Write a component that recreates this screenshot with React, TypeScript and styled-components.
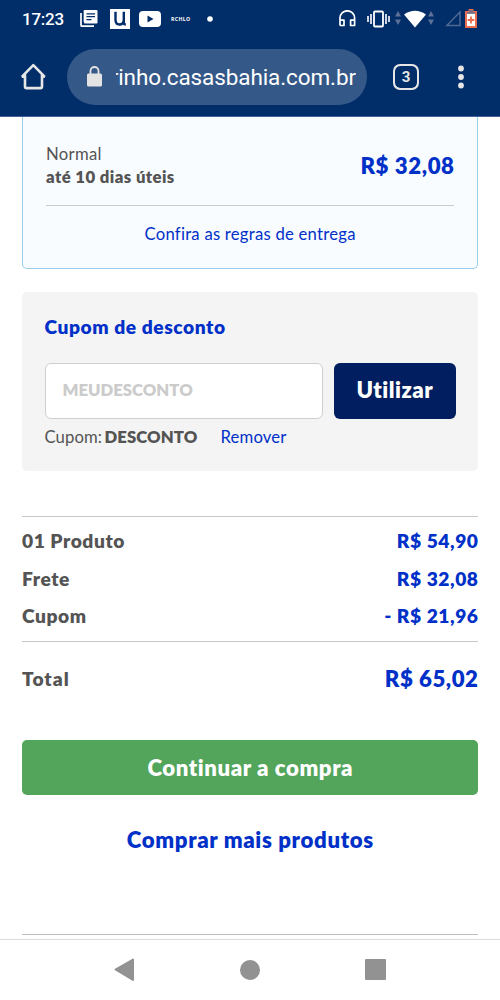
import React from "react";
import styled, { createGlobalStyle } from "styled-components";

const Global = createGlobalStyle`
  * { box-sizing: border-box; }
  body { margin: 0; background: #fff; }
  button { border: 0; padding: 0; background: none; font: inherit; cursor: pointer; }
  svg { display: block; flex: none; }
`;

const blue = "#0030c8";
const gray = "#545454";

const Screen = styled.main`
  width: 500px;
  height: 1000px;
  overflow: hidden;
  display: flex;
  flex-direction: column;
  background: #fff;
  font-family: Lato, "Noto Sans", sans-serif;
`;

const Header = styled.header`
  height: 117px;
  flex: none;
  background: #012d69;
  border-bottom: 1px solid #46619b;
  font-family: Roboto, sans-serif;
  color: #fff;
`;

const StatusBar = styled.div`
  height: 37px;
  padding-left: 22px;
  display: flex;
  align-items: center;
`;

const Clock = styled.span`
  width: 58px;
  font-size: 17px;
  font-weight: 500;
  line-height: 36px;
  letter-spacing: -0.25px;
  padding-top: 1px;
`;

const Carrier = styled.span`
  width: 36px;
  margin-left: 10px;
  font-family: "Open Sans", sans-serif;
  font-size: 5.2px;
  font-weight: 700;
  letter-spacing: 0.35px;
`;

const Toolbar = styled.div`
  height: 79px;
  display: flex;
  align-items: center;
  padding-left: 20px;
`;

const AddressBar = styled.div`
  width: 300px;
  height: 56px;
  margin: 0 26px 0 20px;
  padding-left: 19px;
  border-radius: 28px;
  background: #345887;
  display: flex;
  align-items: center;
`;

const Url = styled.div`
  width: 240px;
  margin-left: 13px;
  display: flex;
  justify-content: flex-end;
  overflow: hidden;
  white-space: nowrap;
  font-size: 22.5px;
  line-height: 30px;
  letter-spacing: -0.1px;
`;

const TabCount = styled.button`
  width: 26px;
  height: 26px;
  border: 2.5px solid #e6e6e6;
  border-radius: 7px;
  outline: 0.5px solid #e6e6e6;
  outline-offset: -2.5px;
  color: #e6e6e6;
  font-family: Roboto, sans-serif;
  font-size: 15px;
  font-weight: 700;
  line-height: 22px;
  text-align: center;
`;

const MenuButton = styled.button`
  margin-left: 39px;
`;

const Content = styled.div`
  height: 822px;
  flex: none;
  padding: 0 22px;
  display: flex;
  flex-direction: column;
`;

type TextProps = { $size?: number; $weight?: number; $color?: string; $track?: number };

const Text = styled.span<TextProps>`
  font-size: ${(p) => p.$size ?? 19.2}px;
  font-weight: ${(p) => p.$weight ?? 800};
  color: ${(p) => p.$color ?? gray};
  letter-spacing: ${(p) => p.$track ?? 0.55}px;
  margin-right: ${(p) => -(p.$track ?? 0.55)}px;
  white-space: nowrap;
`;

const DeliveryCard = styled.section`
  height: 152px;
  flex: none;
  padding: 26px 23px 0;
  border: 1px solid #99cdea;
  border-top: 0;
  border-radius: 0 0 5px 5px;
  background: #f9fcff;
`;

const DeliveryRow = styled.div`
  height: 63px;
  display: flex;
  justify-content: space-between;
  border-bottom: 1px solid #c8cccf;
`;

const DeliveryInfo = styled.div`
  display: flex;
  flex-direction: column;
  line-height: 23px;
`;

const DeliveryPrice = styled.div`
  line-height: 46px;
`;

const DeliveryLink = styled.div`
  padding-top: 16px;
  line-height: 23px;
  text-align: center;
`;

const CouponBox = styled.section`
  height: 179px;
  flex: none;
  margin-top: 23px;
  padding: 22px 22.5px 0;
  border-radius: 5px;
  background: #f4f4f4;
`;

const CouponTitle = styled.h2`
  margin: 0;
  line-height: 25px;
  font-size: inherit;
`;

const CouponForm = styled.div`
  display: flex;
  gap: 11px;
  margin-top: 23px;
`;

const CouponField = styled.div`
  width: 278.5px;
  height: 55.5px;
  padding-left: 17px;
  border: 1.5px solid #cfcfcf;
  border-radius: 6px;
  background: #fff;
  line-height: 52px;
`;

const ApplyButton = styled.button`
  width: 122px;
  height: 55.5px;
  border-radius: 6px;
  background: #001e60;
  line-height: 54px;
`;

const CouponStatus = styled.div`
  display: flex;
  margin-top: 6.5px;
  line-height: 24px;
`;

const CouponCode = styled.span`
  width: 116px;
  display: flex;
`;

const CouponLabel = styled.span`
  width: 60px;
`;

const Summary = styled.section`
  margin-top: 45px;
  border-top: 1px solid #c8c8c8;
  border-bottom: 1px solid #c8c8c8;
  height: 126px;
  flex: none;
  padding-top: 5px;
`;

const SummaryRow = styled.div<{ $height?: number }>`
  height: ${(p) => p.$height ?? 37.5}px;
  line-height: ${(p) => (p.$height ?? 37.5) - 0.5}px;
  flex: none;
  display: flex;
  justify-content: space-between;
`;

const CheckoutButton = styled.button`
  height: 55.5px;
  flex: none;
  margin-top: 22.5px;
  border-radius: 5px;
  background: #52a55a;
  line-height: 55px;
`;

const MoreButton = styled.button`
  height: 56px;
  flex: none;
  margin-top: 16px;
  line-height: 57px;
`;

const FooterRule = styled.hr`
  width: 100%;
  margin: 67px 0 0;
  border: 0;
  border-top: 1px solid #bfbfbf;
`;

const NavBar = styled.nav`
  flex: 1;
  border-top: 1px solid #dcdcdc;
  background: #fff;
  display: flex;
  align-items: center;
  justify-content: center;
  gap: 105px;
  padding-bottom: 1px;
`;

const StatusIcons = () => (
  <>
    <svg width="18" height="19" viewBox="0 0 18 19" fill="none" stroke="#fff">
      <path d="M4 1h12.5a1 1 0 0 1 1 1v11.5a1 1 0 0 1-1 1H5a1 1 0 0 1-1-1z" fill="#fff" stroke="none" />
      <path d="M1 4v12.2a1 1 0 0 0 1 1h12M4.500 13V1.500" strokeWidth="1.7" />
      <path d="M6.500 4.800h8.500M6.500 7.700h8.500M6.500 10.600h5" stroke="#012d69" strokeWidth="1.2" />
    </svg>
    <svg style={{ marginLeft: 12 }} width="20" height="20" viewBox="0 0 20 20">
      <path d="M0 0h20v20H0z" fill="#fff" />
      <path d="M5.500 2.800v8q0 4.700 4 4.700t4.300-4.700V2.800M13.800 10v3.500q0 2 2 2" fill="none" stroke="#012d69" strokeWidth="2.400" />
    </svg>
    <svg style={{ marginLeft: 9 }} width="22" height="16" viewBox="0 0 22 16">
      <rect width="22" height="16" rx="4" fill="#fff" />
      <path d="M8.500 4.500v7l6-3.500z" fill="#012d69" />
    </svg>
    <Carrier>RCHLO</Carrier>
    <svg width="6" height="6" viewBox="0 0 6 6"><circle cx="3" cy="3" r="2.800" fill="#fff" /></svg>
    <svg style={{ marginLeft: 126 }} width="17" height="17" viewBox="0 0 17 17" fill="none" stroke="#fff" strokeWidth="1.7">
      <path d="M1 13V8a7.300 7.200 0 0 1 14.600 0v7.500h-4v-5.300h4M1 10.200h4v5.300H2a1 1 0 0 1-1-1z" strokeLinejoin="round" />
    </svg>
    <svg style={{ marginLeft: 11 }} width="23" height="18" viewBox="0 0 23 18" fill="none" stroke="#fff" strokeWidth="1.6">
      <rect x="7" y="1.500" width="9" height="15" rx="1" strokeWidth="1.800" />
      <path d="M4 4v10M1 6v6M19 4v10M22 6v6" />
    </svg>
    <svg style={{ marginLeft: 4 }} width="41" height="18" viewBox="0 0 41 18">
      <path d="M1 6.500l3-5.500 3 5.500zM1 9.500l3 5.500 3-5.500zM34 6.500l3-5.500 3 5.500zM34 9.500l3 5.500 3-5.500z" fill="#5d7196" />
      <path d="M10 4.500q11-7.500 22 0L21 17.500z" fill="#fff" />
    </svg>
    <svg style={{ marginLeft: 10 }} width="17" height="17" viewBox="0 0 17 17">
      <path d="M1.800 15.500H15V2z" fill="none" stroke="#506b94" strokeWidth="1.4" />
    </svg>
    <svg style={{ marginLeft: 3 }} width="12" height="19" viewBox="0 0 12 19">
      <path d="M3.500 0h5v2H12v17H0V2h3.500z" fill="#ee6b4d" />
      <path d="M2 4.500h8V17H2z" fill="#fff" />
      <path d="M2 4h8M4 2h4" stroke="#5d6f8f" strokeWidth="1.5" />
      <path d="M6 7.500v7M2.700 11h6.600" stroke="#ee6b4d" strokeWidth="1.8" />
    </svg>
  </>
);

const HomeIcon = () => (
  <svg width="27" height="27" viewBox="0 0 27 27" fill="none" stroke="#e6e6e6" strokeWidth="2.600" strokeLinejoin="round">
    <path d="M1.800 13.800L13.300 2.200 24.800 13.800M5 11.500v12q0 1.600 1.500 1.600h14q1.500 0 1.500-1.600v-12M1.800 13.800H5M22 13.800h2.800" />
  </svg>
);

const LockIcon = () => (
  <svg width="17" height="22" viewBox="0 0 17 22">
    <rect x="1" y="7.500" width="15" height="13" rx="1.500" fill="#e3e3e3" />
    <path d="M4.500 9V5a4 4 0 0 1 8 0V9" fill="none" stroke="#e3e3e3" strokeWidth="1.800" />
  </svg>
);

export default function App() {
  return (
    <Screen>
      <Global />
      <Header>
        <StatusBar>
          <Clock>17:23</Clock>
          <StatusIcons />
        </StatusBar>
        <Toolbar>
          <HomeIcon />
          <AddressBar>
            <LockIcon />
            <Url>rinho.casasbahia.com.br</Url>
          </AddressBar>
          <TabCount>3</TabCount>
          <MenuButton aria-label="Menu">
            <svg width="6" height="24" viewBox="0 0 6 24" fill="#e6e6e6">
              <circle cx="3" cy="3.500" r="2.900" />
              <circle cx="3" cy="12" r="2.900" />
              <circle cx="3" cy="20.500" r="2.900" />
            </svg>
          </MenuButton>
        </Toolbar>
      </Header>

      <Content>
        <DeliveryCard>
          <DeliveryRow>
            <DeliveryInfo>
              <Text $size={16.7} $weight={400} $track={0.3}>Normal</Text>
              <Text $size={16.7} $track={0.42}>até 10 dias úteis</Text>
            </DeliveryInfo>
            <DeliveryPrice><Text $size={22.2} $color={blue} $track={0.6}>R$ 32,08</Text></DeliveryPrice>
          </DeliveryRow>
          <DeliveryLink><Text $size={16.7} $weight={400} $color={blue} $track={0.23}>Confira as regras de entrega</Text></DeliveryLink>
        </DeliveryCard>

        <CouponBox>
          <CouponTitle><Text $color={blue} $track={0.56}>Cupom de desconto</Text></CouponTitle>
          <CouponForm>
            <CouponField><Text $size={16.7} $color="#cbcbcb" $track={0}>MEUDESCONTO</Text></CouponField>
            <ApplyButton><Text $size={22.2} $color="#fff" $track={0.5}>Utilizar</Text></ApplyButton>
          </CouponForm>
          <CouponStatus>
            <CouponLabel><Text $size={16.7} $weight={400} $track={0.1}>Cupom:</Text></CouponLabel>
            <CouponCode><Text $size={16.7} $track={0.1}>DESCONTO</Text></CouponCode>
            <Text $size={16.7} $weight={400} $color={blue} $track={0.15}>Remover</Text>
          </CouponStatus>
        </CouponBox>

        <Summary>
          <SummaryRow><Text>01 Produto</Text><Text $color={blue}>R$ 54,90</Text></SummaryRow>
          <SummaryRow><Text>Frete</Text><Text $color={blue}>R$ 32,08</Text></SummaryRow>
          <SummaryRow><Text>Cupom</Text><Text $color={blue}>- R$ 21,96</Text></SummaryRow>
        </Summary>
        <SummaryRow $height={75}><Text $track={1}>Total</Text><Text $size={22.2} $color={blue}>R$ 65,02</Text></SummaryRow>
        <CheckoutButton><Text $size={22.2} $color="#fff" $track={0.56}>Continuar a compra</Text></CheckoutButton>
        <MoreButton><Text $size={22.2} $color={blue} $track={0.64}>Comprar mais produtos</Text></MoreButton>
        <FooterRule />
      </Content>

      <NavBar>
        <svg width="21" height="24" viewBox="0 0 21 24">
          <path d="M1.500 11.500L19 1.500v20.500z" fill="#929292" stroke="#929292" strokeWidth="2" strokeLinejoin="round" />
        </svg>
        <svg width="20" height="20" viewBox="0 0 20 20"><circle cx="10" cy="10" r="10" fill="#929292" /></svg>
        <svg width="21" height="21" viewBox="0 0 21 21"><rect width="21" height="21" rx="1" fill="#929292" /></svg>
      </NavBar>
    </Screen>
  );
}
